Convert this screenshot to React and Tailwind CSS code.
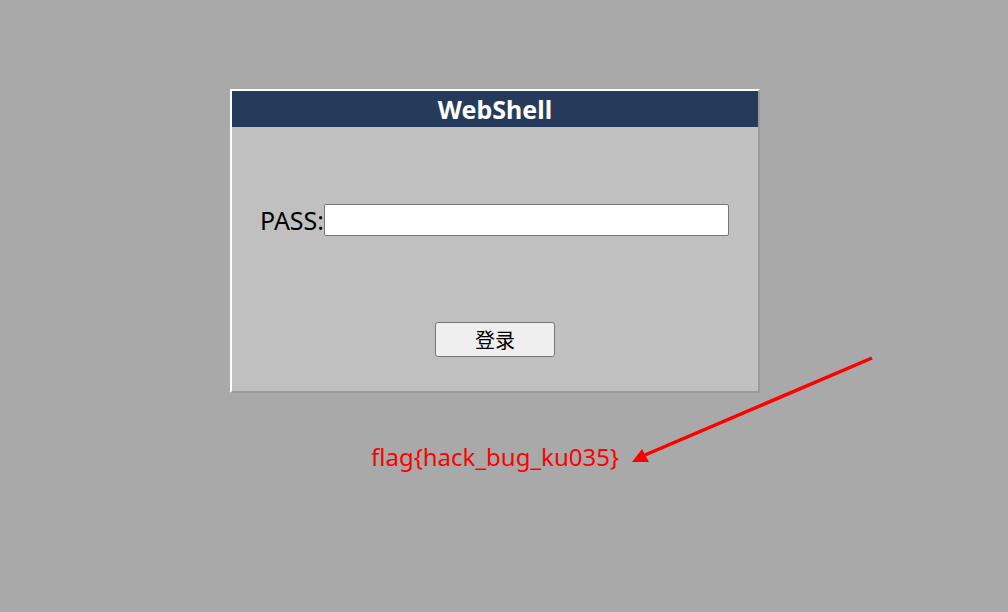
import React from 'react';

const Arrow = () => (
    <svg className="absolute left-0 top-0 pointer-events-none" width="1008" height="612">
        <line x1="872" y1="358" x2="645" y2="455" stroke="#ff0000" strokeWidth="3.5" />
        <polygon points="632,462 642,449 649,462" fill="#ff0000" />
    </svg>
);

const App = () => {
    return (
        <div className="relative w-[1008px] h-[612px] bg-[#a9a9a9] overflow-hidden" style={{ fontFamily: '"Noto Sans", "Open Sans", "Noto Sans CJK SC", sans-serif' }}>
            <div className="pt-[89px] pl-[230px]">
                <div className="w-[530px] h-[304px] border-2 border-t-white border-l-white border-r-[#9a9a9a] border-b-[#9a9a9a] bg-[#c0c0c0] flex flex-col">
                    <div className="h-[36px] bg-[#263b5c] text-white text-[25px] font-bold flex items-center justify-center leading-none">
                        WebShell
                    </div>
                    <div className="flex items-center pl-[28px] mt-[77px] h-[32px]">
                        <span className="text-[25px] text-black leading-none">PASS:</span>
                        <input
                            type="password"
                            className="w-[405px] h-[32px] bg-white border border-[#767676] rounded-[2px] outline-none"
                        />
                    </div>
                    <div className="flex justify-center mt-[86px]">
                        <button
                            className="w-[120px] h-[35px] bg-[#efefef] border border-[#767676] rounded-[3px] text-[20px] text-black leading-none"
                            style={{ fontFamily: '"Noto Sans CJK SC", sans-serif' }}
                        >
                            登录
                        </button>
                    </div>
                </div>
                <div className="w-[530px] text-center mt-[52px] text-[24px] text-[#ff0000] leading-none">
                    flag{'{'}hack_bug_ku035{'}'}
                </div>
            </div>
            <Arrow />
        </div>
    );
};

export default App;
